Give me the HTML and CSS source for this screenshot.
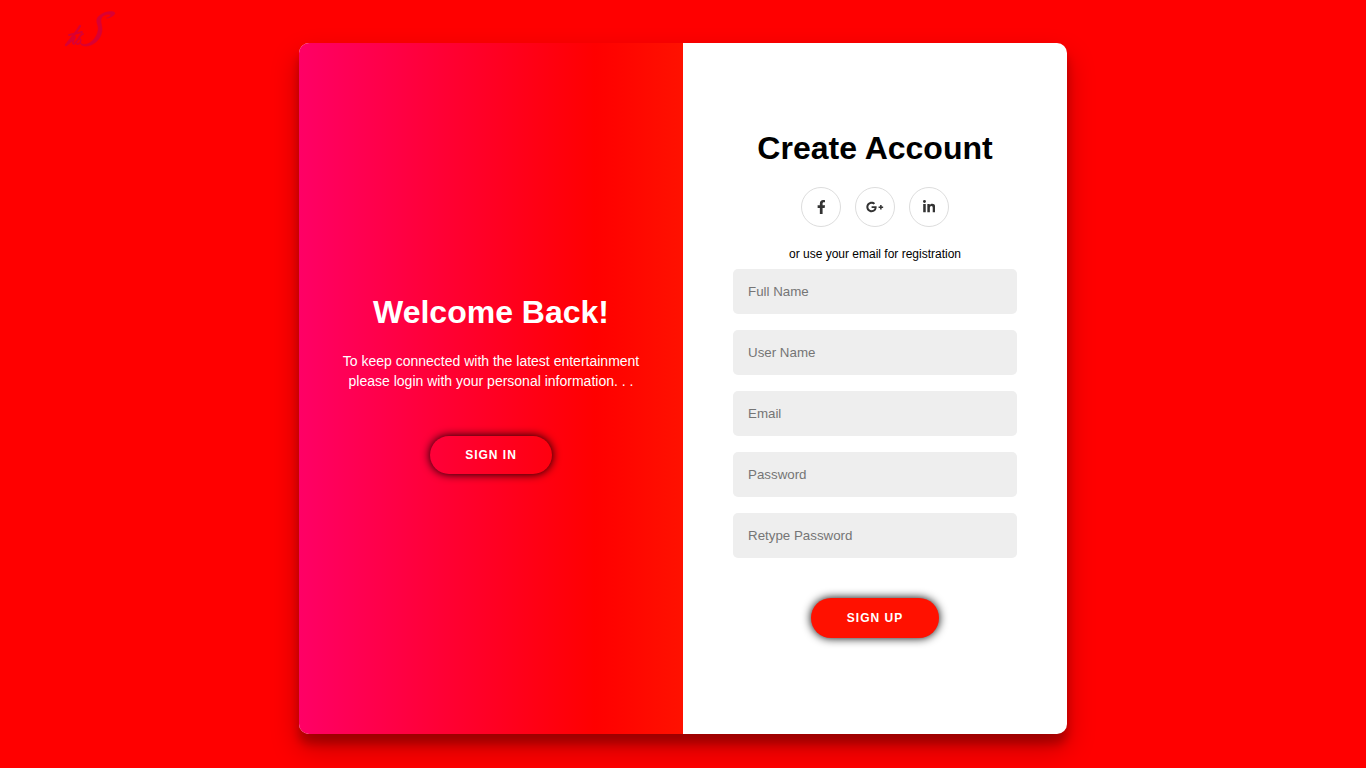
FILE: index.html
```html
<!DOCTYPE html>
<html lang="en">
<head>
<meta charset="utf-8">
<title>Create Account</title>
<link rel="stylesheet" href="styles.css">
</head>
<body>
<a class="logo" href="#" aria-label="Home">
  <svg viewBox="0 0 80 60" width="80" height="60" fill="none" stroke="#d90033" stroke-linecap="round" stroke-linejoin="round">
    <path stroke-width="0.600" fill="#d90033" d="M57 18C60 18 65 15 65 13C64 11 57 11 52 14C46 17 46 21 48 26C49 32 46 38 41 42C37 45 33 45 30 43C31 46 36 47 41 45C48 42 52 36 52 29C52 24 49 20 53 16C56 14 60 14 61 15C61 16 59 17 57 18Z"/>
    <path stroke-width="2.400" d="M30 26C26 33 21 39 16 45"/>
    <path stroke-width="1.800" d="M16 45C19 44 22 40 25 37C23 41 22 44 24 44C27 42 29 37 32 34M19 35L32 32M33 34C29 36 28 38 30 39C32 41 30 44 27 44"/>
  </svg>
</a>
<main class="page">
  <div class="card">
    <section class="welcome">
      <h1 class="title">Welcome Back!</h1>
      <p class="lead">To keep connected with the latest entertainment please login with your personal information. . .</p>
      <button class="button button-ghost" type="button">Sign In</button>
    </section>
    <form class="signup">
      <h1 class="title">Create Account</h1>
      <div class="socials">
        <a class="social" href="#" aria-label="Facebook"><svg viewBox="0 0 320 512" height="14" fill="currentColor"><path d="M279.140 288l14.220-92.660h-88.910v-60.130c0-25.350 12.420-50.060 52.240-50.060h40.420V6.260S260.430 0 225.360 0c-73.220 0-121.080 44.380-121.080 124.720v70.620H22.890V288h81.390v224h100.170V288z"/></svg></a>
        <a class="social" href="#" aria-label="Google Plus"><svg viewBox="0 0 640 512" height="14" fill="currentColor"><path d="M386.061 228.496c1.834 9.692 3.143 19.384 3.143 31.956C389.204 370.205 315.599 448 204.800 448c-106.084 0-192-85.915-192-192s85.916-192 192-192c51.864 0 95.083 18.859 128.611 50.292l-52.126 50.030c-14.145-13.621-39.028-29.599-76.485-29.599-65.484 0-118.920 54.221-118.920 121.277 0 67.056 53.436 121.277 118.920 121.277 75.961 0 104.513-54.745 108.965-82.773H204.800v-66.009h181.261zm185.406 6.437V179.200h-56.001v55.733h-55.733v56.001h55.733v55.733h56.001v-55.733H627.200v-56.001h-55.733z"/></svg></a>
        <a class="social" href="#" aria-label="LinkedIn"><svg viewBox="0 0 448 512" height="14" fill="currentColor"><path d="M100.280 448H7.400V148.900h92.880zM53.790 108.100C24.090 108.100 0 83.500 0 53.800a53.790 53.790 0 0 1 107.580 0c0 29.700-24.100 54.300-53.790 54.300zM447.900 448h-92.680V302.400c0-34.700-.7-79.200-48.290-79.200-48.290 0-55.690 37.700-55.690 76.700V448h-92.780V148.900h89.080v40.800h1.300c12.400-23.500 42.690-48.300 87.880-48.300 94 0 111.280 61.900 111.280 142.300V448z"/></svg></a>
      </div>
      <span class="hint">or use your email for registration</span>
      <input class="field" type="text" placeholder="Full Name" aria-label="Full Name">
      <input class="field" type="text" placeholder="User Name" aria-label="User Name">
      <input class="field" type="email" placeholder="Email" aria-label="Email">
      <input class="field" type="password" placeholder="Password" aria-label="Password">
      <input class="field" type="password" placeholder="Retype Password" aria-label="Retype Password">
      <button class="button button-solid" type="submit">Sign Up</button>
    </form>
  </div>
</main>
</body>
</html>
```
FILE: styles.css
```css
* { box-sizing: border-box; }
body {
  margin: 0;
  background: #ff0000;
  font-family: "Liberation Sans", Arial, sans-serif;
}
.logo {
  position: absolute;
  left: 50px;
  top: 0;
}
.logo svg { display: block; }
.page {
  min-height: 100vh;
  padding-top: 9px;
  display: flex;
  align-items: center;
  justify-content: center;
}
.card {
  display: grid;
  grid-template-columns: 1fr 1fr;
  width: 768px;
  max-width: 100%;
  min-height: 90vh;
  border-radius: 10px;
  overflow: hidden;
  background: #fff;
  box-shadow: 0 14px 28px rgba(0, 0, 0, .25), 0 10px 10px rgba(0, 0, 0, .22);
}
.welcome, .signup {
  display: flex;
  flex-direction: column;
  align-items: center;
  justify-content: center;
  text-align: center;
}
.welcome {
  padding: 0 40px 10px;
  color: #fff;
  background: linear-gradient(to right, #ff0066, #ff0000 77%, #ff1100);
}
.signup { padding: 0 50px 10px; }
.title {
  margin: 0;
  font-size: 32px;
  line-height: 36px;
  font-weight: bold;
}
.lead {
  margin: 21px 0 45px;
  font-size: 14px;
  line-height: 20px;
}
.button {
  border: 0;
  border-radius: 20px;
  color: #fff;
  font-family: inherit;
  font-size: 12px;
  font-weight: bold;
  letter-spacing: 1px;
  text-transform: uppercase;
}
.button-ghost {
  height: 38px;
  padding: 0 35px;
  background: transparent;
  box-shadow: 0 0 10px #000;
}
.button-solid {
  height: 40px;
  margin-top: 32px;
  padding: 0 36px;
  background: #ff1100;
  box-shadow: 0 0 10px #000;
}
.socials {
  display: flex;
  gap: 14px;
  margin: 21px 0 20px;
}
.social {
  display: flex;
  align-items: center;
  justify-content: center;
  width: 40px;
  height: 40px;
  border: 1px solid #ddd;
  border-radius: 50%;
  color: #333;
}
.hint {
  font-size: 12px;
  line-height: 14px;
}
.field {
  width: 100%;
  height: 45px;
  margin: 8px 0;
  padding: 0 15px;
  border: 0;
  border-radius: 5px;
  background: #eee;
  font-family: inherit;
}
```
